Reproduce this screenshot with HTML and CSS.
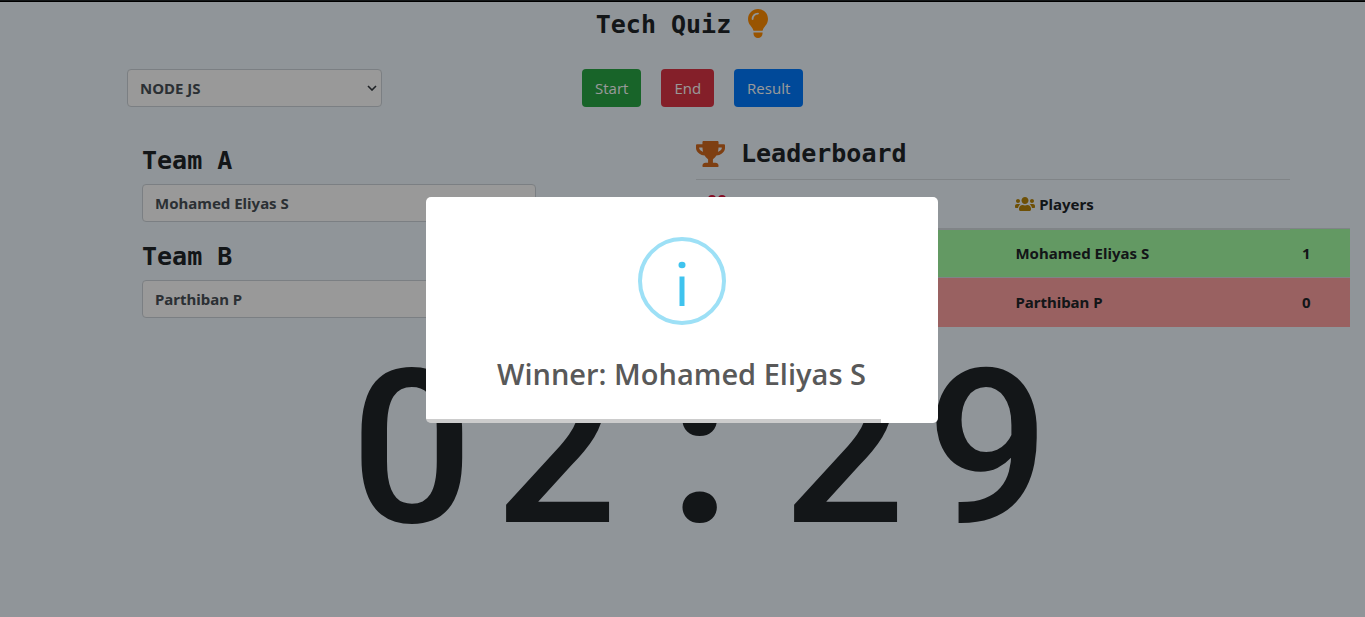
FILE: index.html
```html
<!DOCTYPE html>
<html lang="en">
<head>
<meta charset="utf-8">
<title>Tech Quiz</title>
<link rel="stylesheet" href="styles.css">
</head>
<body>
<header class="topbar"></header>
<main class="page">
  <h1 class="heading page-title">Tech Quiz
    <svg class="icon-bulb" viewBox="0 0 384 512" aria-hidden="true"><path d="M272 384c9.600-31.900 29.500-59.100 49.200-86.200c5.200-7.100 10.400-14.200 15.400-21.400c19.800-28.500 31.400-63 31.400-100.300C368 78.800 289.200 0 192 0S16 78.800 16 176c0 37.300 11.600 71.900 31.400 100.300c5 7.200 10.200 14.300 15.400 21.400c19.800 27.100 39.700 54.400 49.200 86.200H272zM192 512c44.200 0 80-35.800 80-80V416H112v16c0 44.200 35.800 80 80 80zM112 176c0 8.800-7.200 16-16 16s-16-7.200-16-16c0-61.900 50.100-112 112-112c8.800 0 16 7.200 16 16s-7.200 16-16 16c-44.200 0-80 35.800-80 80z"/></svg>
  </h1>

  <div class="controls">
    <select class="field topic" aria-label="Topic"><option>NODE JS</option></select>
    <div class="actions">
      <button class="btn btn-start" type="button">Start</button>
      <button class="btn btn-end" type="button">End</button>
      <button class="btn btn-result" type="button">Result</button>
    </div>
  </div>

  <div class="board">
    <section class="teams">
      <label class="heading" for="team-a">Team A</label>
      <input class="field" id="team-a" type="text" value="Mohamed Eliyas S">
      <label class="heading" for="team-b">Team B</label>
      <input class="field" id="team-b" type="text" value="Parthiban P">
    </section>

    <section class="leaderboard">
      <h2 class="heading leader-title">
        <svg class="icon-trophy" viewBox="0 0 576 512" aria-hidden="true"><path d="M552 64H448V24c0-13.300-10.700-24-24-24H152c-13.300 0-24 10.700-24 24v40H24C10.700 64 0 74.700 0 88v56c0 35.700 22.500 72.400 61.900 100.700 31.500 22.700 69.800 37.100 110 41.700C203.300 338.500 240 360 240 360v72h-48c-35.300 0-64 20.700-64 56v12c0 6.600 5.400 12 12 12h296c6.600 0 12-5.400 12-12v-12c0-35.300-28.700-56-64-56h-48v-72s36.700-21.500 68.100-73.600c40.300-4.600 78.600-19 110-41.700 39.300-28.300 61.900-65 61.900-100.700V88c0-13.300-10.700-24-24-24zM99.300 192.800C74.900 175.200 64 155.600 64 144v-16h64.200c1 32.600 5.800 61.200 12.800 86.200-15.100-5.200-29.200-12.400-41.700-21.400zM512 144c0 16.100-17.700 36.100-35.300 48.800-12.500 9-26.700 16.200-41.800 21.400 7-25 11.800-53.600 12.800-86.200H512v16z"/></svg>
        Leaderboard
      </h2>
      <table class="scores">
        <colgroup><col class="col-team"><col><col class="col-score"></colgroup>
        <thead>
          <tr>
            <th><svg class="icon-team" viewBox="0 0 18 18" aria-hidden="true"><circle cx="4" cy="5" r="4"/><circle cx="14" cy="5" r="4"/><path d="M0 18v-4q0-4 4-4t4 4v4zM10 18v-4q0-4 4-4t4 4v4z"/></svg></th>
            <th><svg class="icon-users" viewBox="0 0 640 512" aria-hidden="true"><path d="M96 224c35.300 0 64-28.700 64-64s-28.700-64-64-64-64 28.700-64 64 28.700 64 64 64zm448 0c35.300 0 64-28.700 64-64s-28.700-64-64-64-64 28.700-64 64 28.700 64 64 64zm32 32h-64c-17.600 0-33.500 7.100-45.100 18.600 40.300 22.100 68.900 62 75.100 109.400h66c17.700 0 32-14.300 32-32v-32c0-35.300-28.700-64-64-64zm-256 0c61.900 0 112-50.100 112-112S381.900 32 320 32 208 82.100 208 144s50.100 112 112 112zm76.800 32h-8.300c-20.800 10-43.900 16-68.500 16s-47.600-6-68.500-16h-8.300C179.600 288 128 339.600 128 403.200V432c0 26.500 21.500 48 48 48h288c26.500 0 48-21.500 48-48v-28.800c0-63.600-51.600-115.200-115.200-115.200zm-223.700-13.400C161.500 263.100 145.600 256 128 256H64c-35.300 0-64 28.700-64 64v32c0 17.700 14.300 32 32 32h65.900c6.300-47.400 34.900-87.300 75.200-109.400z"/></svg> Players</th>
          </tr>
        </thead>
        <tbody>
          <tr class="win"><td></td><td>Mohamed Eliyas S</td><td>1</td></tr>
          <tr class="lose"><td></td><td>Parthiban P</td><td>0</td></tr>
        </tbody>
      </table>
    </section>
  </div>

  <div class="timer" role="timer"><span>0</span><span>2</span><span class="colon">:</span><span>2</span><span>9</span></div>
</main>

<div class="overlay">
  <div class="modal" role="dialog" aria-modal="true" aria-labelledby="winner">
    <svg class="icon-info" viewBox="0 0 88 88" aria-hidden="true"><circle class="ring" cx="44" cy="44" r="42"/><ellipse cx="44" cy="28" rx="3.500" ry="3.200"/><path d="M41.500 39.500h5V69h-5z"/></svg>
    <h2 class="modal-title" id="winner">Winner: Mohamed Eliyas S</h2>
    <div class="progress"><div class="progress-fill" style="width: 89%"></div></div>
  </div>
</div>
</body>
</html>
```

FILE: styles.css
```css
* {
  box-sizing: border-box;
}

body {
  margin: 0;
  min-height: 100vh;
  background: #f0f8ff;
  color: #212529;
  font: 15px/24px "Segoe UI", "Noto Sans", "Open Sans", sans-serif;
  overflow: hidden;
}

.topbar {
  height: 2px;
  background: #212529;
  border-bottom: 1px solid #000;
}

.page {
  padding-top: 6px;
}

.heading {
  display: block;
  margin: 0;
  font: bold 25px/34px "DejaVu Sans Mono", monospace;
}

.page-title,
.leader-title {
  display: flex;
  align-items: center;
}

.page-title {
  justify-content: center;
  gap: 16px;
}

.icon-bulb {
  width: 22px;
  height: 29px;
  margin-bottom: 4px;
  fill: #ff8c00;
}

.controls {
  display: grid;
  grid-template-columns: 455fr 783fr;
  padding-left: 127px;
  margin-top: 27px;
}

.field {
  width: 100%;
  height: 38px;
  padding: 0 12px;
  border: 1px solid #ced4da;
  border-radius: 4px;
  background: #fff;
  color: #495057;
  font: bold 15px/24px "Noto Sans", "Open Sans", sans-serif;
}

.topic {
  width: 56%;
  appearance: none;
  background: #fff url("data:image/svg+xml,%3Csvg xmlns='http://www.w3.org/2000/svg' viewBox='0 0 10 6'%3E%3Cpath d='M1 1l4 4 4-4' fill='none' stroke='%23343a40' stroke-width='1.6'/%3E%3C/svg%3E") no-repeat right 4px center / 10px 6px;
}

.actions {
  display: flex;
  gap: 20px;
}

.btn {
  height: 38px;
  padding: 0 13px;
  border: 0;
  border-radius: 4px;
  color: #fff;
  font: 15px/24px "Open Sans", "Noto Sans", sans-serif;
}

.btn-start {
  background: #28a745;
}

.btn-end {
  background: #dc3545;
}

.btn-result {
  background: #007bff;
}

.board {
  display: grid;
  grid-template-columns: 394fr 654fr;
  column-gap: 160px;
  padding: 30px 15px 0 142px;
}

.teams .heading {
  margin: 7px 0 6px;
}

.teams .field + .heading {
  margin-top: 18px;
}

.leader-title {
  gap: 16px;
  padding-bottom: 8px;
}

.icon-trophy {
  width: 29px;
  height: 26px;
  fill: #d2691e;
}

.scores {
  width: 100%;
  table-layout: fixed;
  border-collapse: collapse;
  font-weight: bold;
  text-align: left;
}

.col-team {
  width: 47%;
}

.col-score {
  width: 60px;
}

.scores th,
.scores td {
  height: 49px;
  padding: 0 12px;
  border-top: 1px solid #d6dce2;
}

.scores th {
  border-bottom: 2px solid #d6dce2;
}

.win {
  background: #a6ffa6;
}

.lose {
  background: #ffa2a2;
}

.icon-users {
  width: 20px;
  height: 16px;
  margin-bottom: 3px;
  vertical-align: middle;
  fill: #b8860b;
}

.icon-team {
  display: block;
  width: 18px;
  height: 18px;
  margin-bottom: 2px;
  fill: #dc143c;
}

.timer {
  display: grid;
  grid-template-columns: repeat(5, 144px);
  justify-content: center;
  padding-left: 35px;
  font: 500 216px/244px Roboto, sans-serif;
  text-align: center;
}

.colon {
  font-weight: 700;
}

.overlay {
  position: fixed;
  inset: 0;
  display: flex;
  align-items: center;
  justify-content: center;
  padding: 13px 12px 10px 10px;
  background: rgba(0, 0, 0, 0.4);
}

.modal {
  width: 512px;
  max-width: 100%;
  overflow: hidden;
  border-radius: 5px;
  background: #fff;
  text-align: center;
}

.icon-info {
  display: block;
  width: 88px;
  height: 88px;
  margin: 40px auto 28px;
  fill: #3fc3ee;
}

.ring {
  fill: none;
  stroke: #9de0f6;
  stroke-width: 4;
}

.modal-title {
  margin: 0 0 24px;
  color: #595959;
  font: 600 29px/42px "Open Sans", "Noto Sans", sans-serif;
}

.progress-fill {
  height: 4px;
  background: rgba(0, 0, 0, 0.2);
}
```
